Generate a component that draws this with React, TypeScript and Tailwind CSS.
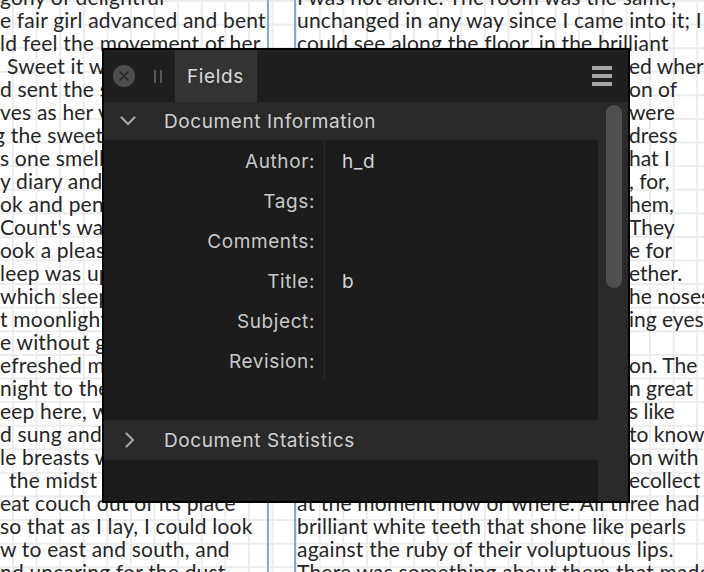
import React from "react";

const leftLines: { text: string; indent?: string }[] = [
  { text: "gony of delightful" },
  { text: "e fair girl advanced and bent" },
  { text: "ld feel the movement of her" },
  { text: "Sweet it was in one sense", indent: "pl-[7px]" },
  { text: "d sent the same tingling" },
  { text: "ves as her voice, but with" },
  { text: "g the sweet, a bitter", indent: "-ml-[6px]" },
  { text: "s one smells in blood." },
  { text: "y diary and my pen" },
  { text: "ok and pen away" },
  { text: "Count's warning" },
  { text: "ook a pleasure in" },
  { text: "leep was upon me" },
  { text: "which sleep" },
  { text: "t moonlight" },
  { text: "e without going" },
  { text: "efreshed me" },
  { text: "night to the gloom" },
  { text: "eep here, where" },
  { text: "d sung and lived" },
  { text: "le breasts were sad" },
  { text: "the midst of war", indent: "pl-[9px]" },
  { text: "eat couch out of its place" },
  { text: "so that as I lay, I could look" },
  { text: "w to east and south, and" },
  { text: "nd uncaring for the dust" },
];

// head sits under the panel, tail shows to the right of it
const rightLines: { head: string; tail?: string }[] = [
  { head: "I was not alone. The room was the same," },
  { head: "unchanged in any way since I came into it; I" },
  { head: "could see along the floor, in the brilliant" },
  { head: "moonlight, my own footsteps mark", tail: "ed where" },
  { head: "I had disturbed the long accumulati", tail: "on of" },
  { head: "dust. In the moonlight opposite me", tail: "were" },
  { head: "three young women, ladies by their", tail: "dress" },
  { head: "and manner. I thought at the time t", tail: "hat I" },
  { head: "must be dreaming when I saw them", tail: ", for," },
  { head: "though the moonlight was behind t", tail: "hem," },
  { head: "they threw no shadow on the floor. ", tail: "They" },
  { head: "came close to me, and looked at m", tail: "e for" },
  { head: "some time, and then whispered tog", tail: "ether." },
  { head: "Two were dark, and had high aquiline t", tail: "he noses" },
  { head: "like the Count, and great dark, pierc", tail: "ing eyes" },
  { head: "that seemed to be almost red" },
  { head: "when contrasted with the pale yellow mo", tail: "on. The" },
  { head: "other was fair, as fair as can be, with", tail: "n great" },
  { head: "wavy masses of golden hair and eye", tail: "s like" },
  { head: "pale sapphires. I seemed somehow ", tail: "to know" },
  { head: "her face, and to know it in connecti", tail: "on with" },
  { head: "some dreamy fear, but I could not r", tail: "ecollect" },
  { head: "at the moment now or where. All three had" },
  { head: "brilliant white teeth that shone like pearls" },
  { head: "against the ruby of their voluptuous lips." },
  { head: "There was something about them that made me" },
];

const fields = [
  { label: "Author:", value: "h_d" },
  { label: "Tags:", value: "" },
  { label: "Comments:", value: "" },
  { label: "Title:", value: "b" },
  { label: "Subject:", value: "" },
  { label: "Revision:", value: "" },
];

function ChevronDown() {
  return (
    <svg width="16" height="10" viewBox="0 0 16 10" className="shrink-0">
      <polyline points="1.5,1.5 8,8 14.5,1.5" fill="none" stroke="#a3a3a3" strokeWidth="2.2" strokeLinecap="round" strokeLinejoin="round" />
    </svg>
  );
}

function ChevronRight() {
  return (
    <svg width="12" height="16" viewBox="0 0 12 16" className="shrink-0">
      <polyline points="2.5,1.5 9,8 2.5,14.5" fill="none" stroke="#a3a3a3" strokeWidth="2.2" strokeLinecap="round" strokeLinejoin="round" />
    </svg>
  );
}

function FieldsPanel() {
  return (
    <div className="absolute left-[102px] top-[48px] flex h-[455px] w-[528px] flex-col border-2 border-black bg-[#1c1c1c] font-['Inter','Noto_Sans',sans-serif] text-[19px] tracking-[0.6px]">
      {/* title bar */}
      <div className="flex h-[52px] shrink-0 items-center bg-[#1f1f1f]">
        <div className="ml-[9px] flex h-[22px] w-[22px] items-center justify-center rounded-full bg-[#4e4e4e]">
          <svg width="10" height="10" viewBox="0 0 10 10">
            <path d="M1 1 L9 9 M9 1 L1 9" stroke="#2b2b2b" strokeWidth="1.8" strokeLinecap="round" />
          </svg>
        </div>
        <div className="ml-[19px] flex h-[13px] gap-[4px]">
          <div className="w-[2px] bg-[#585858]" />
          <div className="w-[2px] bg-[#585858]" />
        </div>
        <div className="ml-[13px] flex h-full w-[82px] items-center bg-[#333333] pl-[12px] pt-[2px] text-[#d8d8d8]">
          Fields
        </div>
        <div className="ml-auto mr-[16px] flex w-[20px] flex-col gap-[4px]">
          <div className="h-[4px] bg-[#a6a6a6]" />
          <div className="h-[4px] bg-[#a6a6a6]" />
          <div className="h-[4px] bg-[#a6a6a6]" />
        </div>
      </div>

      {/* body */}
      <div className="flex min-h-0 flex-1">
        <div className="flex flex-1 flex-col">
          <div className="flex h-[38px] items-center bg-[#2a2a2a] pl-[16px] text-[#d0d0d0]">
            <ChevronDown />
            <span className="ml-[28px] pt-[2px]">Document Information</span>
          </div>
          <div className="flex">
            <div className="w-[221px] border-r border-[#2a2a2a] pr-[9px] text-right text-[#c8c8c8]">
              {fields.map((f) => (
                <div key={f.label} className="flex h-[40px] items-center justify-end pt-[4px]">
                  {f.label}
                </div>
              ))}
            </div>
            <div className="flex-1 pl-[17px] text-[#d4d4d4]">
              {fields.map((f) => (
                <div key={f.label} className="flex h-[40px] items-center pt-[4px]">
                  {f.value}
                </div>
              ))}
            </div>
          </div>
          <div className="h-[40px]" />
          <div className="flex h-[40px] items-center bg-[#2a2a2a] pl-[20px] text-[#d0d0d0]">
            <ChevronRight />
            <span className="ml-[28px] pt-[2px]">Document Statistics</span>
          </div>
        </div>
        <div className="w-[30px] shrink-0 bg-[#2a2a2a] pl-[8px] pt-[3px]">
          <div className="h-[183px] w-[16px] rounded-full bg-[#4f4f4f]" />
        </div>
      </div>
    </div>
  );
}

export default function App() {
  return (
    <div className="relative h-[572px] w-[704px] overflow-hidden bg-white [background-image:linear-gradient(to_right,#ececec_2px,transparent_2px),linear-gradient(to_bottom,#ececec_2px,transparent_2px)] [background-position:12px_0] [background-size:23.6px_23.6px]">
      <div className="flex h-full font-['Lato','Open_Sans',sans-serif] text-[21px] leading-[23px] tracking-[0.2px] text-[#262626]">
        <div className="-mt-[15px] w-[267px] shrink-0 overflow-hidden whitespace-nowrap">
          {leftLines.map((l, i) => (
            <div key={i} className={l.indent ?? ""}>
              {l.text}
            </div>
          ))}
        </div>
        <div className="w-[2px] shrink-0 bg-[#7ea6e8]" />
        <div className="w-[25px] shrink-0" />
        <div className="w-[2px] shrink-0 bg-[#7ea6e8]" />
        <div className="-mt-[15px] flex-1 overflow-hidden whitespace-nowrap pl-[1px]">
          {rightLines.map((l, i) =>
            l.tail ? (
              <div key={i} className="flex">
                <span className="w-[332px] shrink-0 overflow-hidden">{l.head}</span>
                <span className="tracking-normal">{l.tail}</span>
              </div>
            ) : (
              <div key={i}>{l.head}</div>
            )
          )}
        </div>
      </div>
      <FieldsPanel />
    </div>
  );
}
